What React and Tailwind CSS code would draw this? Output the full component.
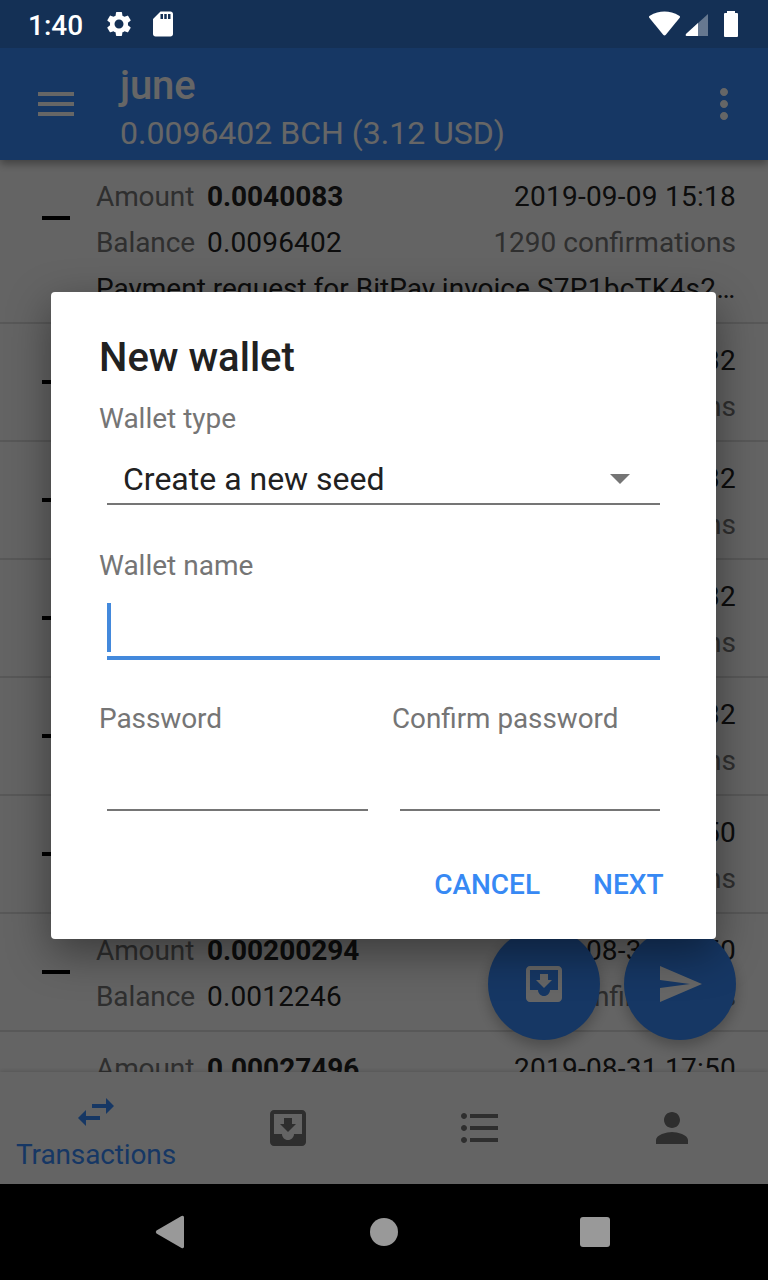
import { MdMoveToInbox, MdSend, MdSwapHoriz, MdFormatListBulleted, MdPerson, MdSettings, MdSdCard, MdMenu, MdMoreVert } from "react-icons/md";

const transactions = [
  { amount: "0.0040083", balance: "0.0096402", date: "2019-09-09 15:18", conf: "1290 confirmations", note: "Payment request for BitPay invoice ", invoice: "S7P1bcTK4s2Xq for merchant" },
  { amount: "0.0010000", balance: "0.0056319", date: "2019-09-06 17:32", conf: "1702 confirmations" },
  { amount: "0.0010000", balance: "0.0046319", date: "2019-09-06 17:32", conf: "1702 confirmations" },
  { amount: "0.0010000", balance: "0.0036319", date: "2019-09-06 17:32", conf: "1702 confirmations" },
  { amount: "0.0010000", balance: "0.0026319", date: "2019-09-06 17:32", conf: "1702 confirmations" },
  { amount: "0.0010000", balance: "0.0032275", date: "2019-08-31 17:50", conf: "2570 confirmations" },
  { amount: "0.00200294", balance: "0.0012246", date: "2019-08-31 17:50", conf: "2570 confirmations" },
  { amount: "0.00027496", balance: "0.0032275", date: "2019-08-31 17:50", conf: "2570 confirmations" },
];

function StatusBar() {
  return (
    <div className="relative z-20 flex h-12 shrink-0 items-center bg-[#143055] pl-7 text-white">
      <span className="w-[76px] pt-[3px] text-[28px] leading-[50px] font-medium">1:40</span>
      <MdSettings className="size-[30px]" />
      <MdSdCard className="ml-[14px] size-[30px]" />
      <svg className="ml-auto h-[26px] w-[92px]" viewBox="0 0 92 26" fill="currentColor">
        <path d="M1.300 6.700Q0.500 5.500 1.800 4.700Q16.500 -3.600 31.200 4.700Q32.500 5.500 31.700 6.700L17.800 23.800Q16.500 25.200 15.200 23.800Z" />
        <path d="M60 3V25H38.500Q37 24.500 38 23Z" opacity="0.35" />
        <path d="M50 12V25H38.500Q37 24.500 38 23Z" />
        <path d="M79 0h8v2h2q1 0 1 1v22q0 1-1 1H77q-1 0-1-1V3q0-1 1-1h2z" />
      </svg>
      <span className="w-7" />
    </div>
  );
}

function AppBar() {
  return (
    <div className="relative z-[1] flex h-28 shrink-0 items-center bg-[#378afa] text-white shadow-[0_4px_8px_rgba(0,0,0,0.35)]">
      <MdMenu className="ml-8 size-12" />
      <div className="ml-10 flex grow flex-col pt-[12px]">
        <h1 className="text-[40px] leading-[46px] font-medium tracking-[-0.1px]">june</h1>
        <p className="text-[32px] leading-[48px]">0.0096402 BCH (3.12 USD)</p>
      </div>
      <MdMoreVert className="mr-5 size-12" />
    </div>
  );
}

function Transaction({ tx }) {
  return (
    <div className="flex shrink-0 border-b-2 border-[#dcdcdc] pt-[14px] pr-8 pb-[10px] pl-[42px] text-[28px] leading-[46px] text-[#212121]">
      <div className="mt-[42px] h-1 w-7 shrink-0 bg-black" />
      <div className="ml-[26px] min-w-0 grow">
        <div className="flex">
          <span className="w-[111px] tracking-[-0.1px] text-[#757575]">Amount</span>
          <span className="grow font-bold tracking-[-0.05px]">{tx.amount}</span>
          <span className="tracking-[0.25px]">{tx.date}</span>
        </div>
        <div className="flex">
          <span className="w-[111px] tracking-[-0.1px] text-[#757575]">Balance</span>
          <span className="grow tracking-[0.17px]">{tx.balance}</span>
          <span className="text-[#757575]">{tx.conf}</span>
        </div>
        {tx.note && <p className="truncate">{tx.note}<span className="tracking-[0.3px]">{tx.invoice}</span></p>}
      </div>
    </div>
  );
}

function Tabs() {
  return (
    <div className="relative z-[2] grid h-28 shrink-0 grid-cols-4 bg-[#fafafa] text-[#737373] shadow-[0_-1px_4px_rgba(0,0,0,0.15)]">
      <div className="flex flex-col items-center pt-4 text-[#378afa]">
        <MdSwapHoriz className="size-12" />
        <span className="mt-px text-[28px] leading-9 tracking-[-0.13px]">Transactions</span>
      </div>
      <div className="flex items-center justify-center"><MdMoveToInbox className="size-12" /></div>
      <div className="flex items-center justify-center"><MdFormatListBulleted className="size-12" /></div>
      <div className="flex items-center justify-center"><MdPerson className="size-12" /></div>
    </div>
  );
}

function Dialog() {
  return (
    <div className="flex h-[647px] w-[665px] flex-col rounded-[4px] bg-white px-12 text-[28px] text-[#757575] shadow-[0_14px_44px_rgba(0,0,0,0.42)]">
      <h2 className="mt-[42px] text-[40px] leading-[48px] font-medium text-[#212121]">New wallet</h2>
      <label className="mt-[21px] leading-8">Wallet type</label>
      <div className="mx-2 mt-[16px] flex h-[54px] items-center justify-between border-b-2 border-[#757575] pt-[3px] pr-[30px] pl-4 text-[32px] text-[#212121]">
        <span>Create a new seed</span>
        <svg className="h-[10px] w-5" viewBox="0 0 20 10" fill="#757575"><path d="M0 0h20L10 10z" /></svg>
      </div>
      <label className="mt-[45px] leading-8">Wallet name</label>
      <div className="mx-2 mt-[21px] h-[57px] border-b-4 border-[#4389dc]">
        <div className="h-[49px] w-1 bg-[#4389dc]" />
      </div>
      <div className="mt-[43px] flex">
        <div className="w-[293px]">
          <label className="block leading-8 tracking-[-0.1px]">Password</label>
          <div className="mr-6 ml-2 h-[76px] border-b-2 border-[#757575]" />
        </div>
        <div className="grow">
          <label className="block text-[27.8px] leading-8">Confirm password</label>
          <div className="mx-2 h-[76px] border-b-2 border-[#757575]" />
        </div>
      </div>
      <div className="mt-[56px] flex justify-end gap-[53px] pr-[4.5px] leading-9 font-medium text-[#3789f4]">
        <button>CANCEL</button>
        <button>NEXT</button>
      </div>
    </div>
  );
}

export default function App() {
  return (
    <div className="relative flex h-[1280px] w-[768px] flex-col overflow-hidden bg-black font-[Roboto,sans-serif]">
      <StatusBar />
      <AppBar />
      <div className="relative flex h-[912px] shrink-0 flex-col overflow-hidden bg-[#fafafa]">
        {transactions.map((tx, i) => <Transaction key={i} tx={tx} />)}
        <div className="absolute right-8 bottom-8 flex gap-6 text-white">
          <div className="flex size-28 items-center justify-center rounded-full bg-[#378afa] shadow-[0_6px_14px_rgba(0,0,0,0.25)]"><MdMoveToInbox className="size-12" /></div>
          <div className="flex size-28 items-center justify-center rounded-full bg-[#378afa] shadow-[0_6px_14px_rgba(0,0,0,0.25)]"><MdSend className="size-12" /></div>
        </div>
      </div>
      <Tabs />
      <div className="grid h-24 shrink-0 grid-cols-[1fr_28px_1fr] items-center text-[#999999]">
        <svg className="ml-[155px] h-[34px] w-[30px]" viewBox="0 0 30 34" fill="currentColor"><path d="M1.500 15.500L26.500 1Q29 0 29 2.500V31.500Q29 34 26.500 33L1.500 18.500Q0 17 1.500 15.500Z" /></svg>
        <div className="size-7 rounded-full bg-[#999999]" />
        <div className="ml-[182px] size-[30px] rounded-[3px] bg-[#999999]" />
      </div>
      <div className="absolute inset-x-0 top-12 z-10 h-[1136px] overflow-hidden bg-black/60 pt-[244px] pl-[51px]">
        <Dialog />
      </div>
    </div>
  );
}
